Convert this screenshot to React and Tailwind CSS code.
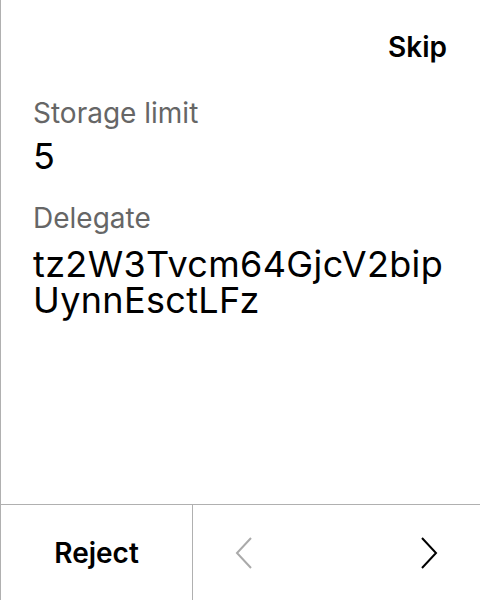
import React from "react";

export default function App() {
  return (
    <div className="w-[480px] h-[600px] bg-white border-l border-[#b0b0b0] flex flex-col" style={{ fontFamily: "Inter, sans-serif" }}>
      <div className="flex-1 flex flex-col pl-[32px] pr-[30px]">
        <div className="flex justify-end pt-[29px] pr-[3px]">
          <span className="text-[28px] font-semibold text-black leading-[36px]">Skip</span>
        </div>
        <div className="mt-[30px] flex flex-col">
          <span className="text-[28px] text-[#666] leading-[36px]">Storage limit</span>
          <span className="mt-[3px] text-[36px] text-black leading-[44px]">5</span>
        </div>
        <div className="mt-[22px] flex flex-col">
          <span className="text-[28px] text-[#666] leading-[36px]">Delegate</span>
          <span className="mt-[10px] text-[36px] text-black leading-[36px] tracking-[0.35px] break-all">tz2W3Tvcm64GjcV2bipUynnEsctLFz</span>
        </div>
      </div>
      <div className="h-[96px] border-t border-[#b0b0b0] flex">
        <div className="w-[192px] border-r border-[#b0b0b0] flex items-center justify-center">
          <span className="text-[28px] font-semibold text-black">Reject</span>
        </div>
        <div className="flex-1 flex items-center justify-between pl-[41px] pr-[41px]">
          <svg width="20" height="34" viewBox="0 0 20 34" fill="none" stroke="#aaa" strokeWidth="2">
            <path d="M17 2 L3 17 L17 32" />
          </svg>
          <svg width="20" height="34" viewBox="0 0 20 34" fill="none" stroke="#000" strokeWidth="2">
            <path d="M3 2 L17 17 L3 32" />
          </svg>
        </div>
      </div>
    </div>
  );
}
